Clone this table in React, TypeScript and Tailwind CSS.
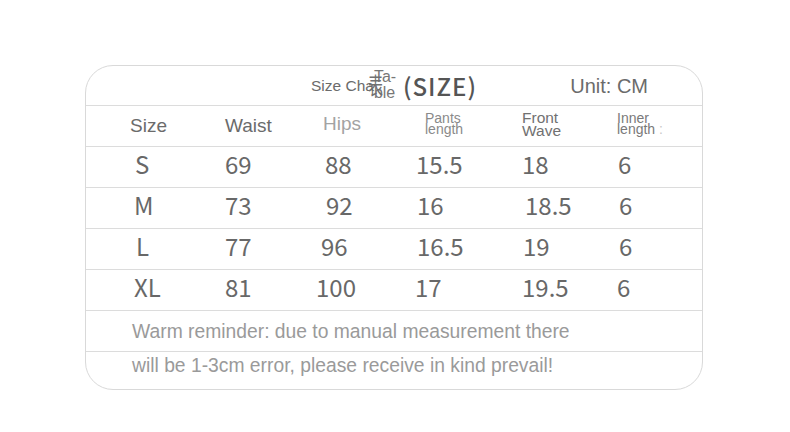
import React from 'react'

const latin = "font-['Liberation_Sans',Arial,sans-serif]"
const cjk = "font-['Noto_Sans_CJK_SC','Noto_Sans',sans-serif]"

// each cell: [text, offset class inside its column]
const rows: [string, string][][] = [
  [['S', 'ml-[5px]'], ['69', 'ml-[3px]'], ['88', 'ml-[9px]'], ['15.5', 'ml-[2px]'], ['18', 'ml-[2px]'], ['6', 'ml-[4px]']],
  [['M', 'ml-[4px]'], ['73', 'ml-[3px]'], ['92', 'ml-[10px]'], ['16', 'ml-[3px]'], ['18.5', 'ml-[5px]'], ['6', 'ml-[5px]']],
  [['L', 'ml-[6px]'], ['77', 'ml-[3px]'], ['96', 'ml-[5px]'], ['16.5', 'ml-[3px]'], ['19', 'ml-[3px]'], ['6', 'ml-[5px]']],
  [['XL', 'ml-[4px]'], ['81', 'ml-[3px]'], ['100', 'ml-[0px]'], ['17', 'ml-[1px]'], ['19.5', 'ml-[2px]'], ['6', 'ml-[3px]']],
]

const cols = 'grid grid-cols-[92px_94px_98px_106px_94px_1fr] items-center pl-[44px]'

export default function App() {
  return (
    <div className="min-h-screen w-full bg-white pt-[65px] pl-[85px]">
      <div className="w-[618px] border border-[#d9d9d9] rounded-[28px] overflow-hidden bg-white">
        {/* title */}
        <div className="h-[39px] flex items-center pl-[225px] pr-[54px]">
          <span className={`${latin} text-[15.5px] text-[#6b6b6b]`}>Size Cha</span>
          <span className="relative w-[29px] h-[34px] mt-[-1px]">
            <span className={`${latin} block text-[16px] leading-[16px] text-[#777] pt-[1px]`}>
              Ta-<br />ble
            </span>
            <span className={`${cjk} absolute left-[-6px] top-[4px] text-[15px] leading-[15px] text-[#707070] scale-y-[1.55] origin-top`}>
              表
            </span>
          </span>
          <span className={`${cjk} text-[24px] font-medium text-[#555] tracking-[1px]`}>(SIZE)</span>
          <span className={`${latin} ml-auto text-[20px] text-[#6b6b6b]`}>Unit: CM</span>
        </div>

        {/* header */}
        <div className={`${cols} h-[41px] border-t border-[#dcdcdc] ${latin}`}>
          <span className="text-[19px] text-[#6b6b6b] mt-[1px]">Size</span>
          <span className="ml-[3px] text-[19px] text-[#6b6b6b]">Waist</span>
          <span className="ml-[7px] text-[19px] text-[#a3a3a3] mt-[-3px]">Hips</span>
          <span className="ml-[11px] text-[14px] leading-[11px] text-[#8a8a8a] mt-[-4px]">
            Pants<br />length
          </span>
          <span className="ml-[2px] text-[15.5px] leading-[12.5px] text-[#717171] mt-[-3px]">
            Front<br />Wave
          </span>
          <span className="ml-[3px] text-[14px] leading-[11px] text-[#7a7a7a] mt-[-4px]">
            Inner<br />length <span className="text-[#c8c8c8]">:</span>
          </span>
        </div>

        {rows.map((r, i) => (
          <div key={i} className={`${cols} h-[41px] border-t border-[#dcdcdc] ${cjk}`}>
            {r.map(([t, off], j) => (
              <span key={j} className={`${off} text-[24px] leading-[24px] text-[#686868] mt-[-6px]`}>
                {t}
              </span>
            ))}
          </div>
        ))}

        {/* footer */}
        <div className={`h-[41px] border-t border-[#dcdcdc] flex items-center pl-[46px] ${latin}`}>
          <span className="text-[19.3px] text-[#9a9a9a] mt-[2px]">
            Warm reminder: due to manual measurement there
          </span>
        </div>
        <div className={`h-[38px] border-t border-[#dcdcdc] flex items-center pl-[46px] pb-[8px] ${latin}`}>
          <span className="text-[19.3px] text-[#9a9a9a]">
            will be 1-3cm error, please receive in kind prevail!
          </span>
        </div>
      </div>
    </div>
  )
}
